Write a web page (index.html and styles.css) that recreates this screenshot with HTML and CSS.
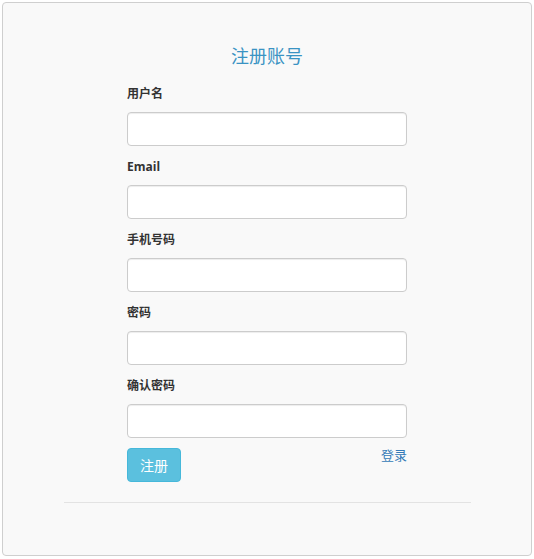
FILE: index.html
```html
<!DOCTYPE html>
<html lang="zh-CN">

<head>
    <meta charset="UTF-8">
    <meta name="viewport" content="width=device-width, initial-scale=1.0">
    <title>注册账号</title>
    <link rel="stylesheet" href="styles.css">
</head>

<body>
    <div class="panel">
        <h3 class="panel-title">注册账号</h3>

        <!-- Register form -->
        <form class="register-form">
            <div class="form-group">
                <label for="username">用户名</label>
                <input type="text" id="username" class="form-control">
            </div>
            <div class="form-group">
                <label for="email">Email</label>
                <input type="email" id="email" class="form-control">
            </div>
            <div class="form-group">
                <label for="phone">手机号码</label>
                <input type="text" id="phone" class="form-control">
            </div>
            <div class="form-group">
                <label for="password">密码</label>
                <input type="password" id="password" class="form-control">
            </div>
            <div class="form-group">
                <label for="confirm">确认密码</label>
                <input type="password" id="confirm" class="form-control">
            </div>
            <div class="form-actions">
                <button type="button" class="btn-info">注册</button>
                <a href="#" class="login-link">登录</a>
            </div>
        </form>

        <hr class="divider">
    </div>
</body>

</html>
```

FILE: styles.css
```css
/* General Reset */
* {
    margin: 0;
    padding: 0;
    box-sizing: border-box;
}

body {
    font-family: 'Open Sans', 'Noto Sans CJK SC', sans-serif;
    font-size: 13px;
    color: #333;
    background: #ffffff;
    padding: 2px 2px 3px 2px;
}

.panel {
    height: 554px;
    background: #f9f9f9;
    border: 1px solid #cfcfcf;
    border-radius: 4px;
    padding-top: 40px;
}

.panel-title {
    text-align: center;
    font-size: 18px;
    font-weight: normal;
    line-height: 26px;
    color: #3a93c3;
    margin-bottom: 13px;
}

.register-form {
    width: 280px;
    margin: 0 auto;
}

.form-group {
    margin-bottom: 9px;
}

.form-group label {
    display: block;
    font-size: 12px;
    font-weight: bold;
    line-height: 20px;
    padding-top: 2px;
    margin-bottom: 8px;
}

.form-control {
    display: block;
    width: 100%;
    height: 34px;
    background: #ffffff;
    border: 1px solid #cccccc;
    border-radius: 4px;
    box-shadow: inset 0 1px 1px rgba(0, 0, 0, 0.075);
}

.form-actions {
    display: flex;
    justify-content: space-between;
    align-items: flex-start;
    padding-top: 1px;
}

.btn-info {
    width: 54px;
    height: 34px;
    font-family: inherit;
    font-size: 14px;
    color: #ffffff;
    background: #5bc0de;
    border: 1px solid #46b8da;
    border-radius: 4px;
}

.login-link {
    font-size: 13px;
    line-height: 14px;
    color: #337ab7;
    text-decoration: none;
}

.divider {
    border: 0;
    border-top: 1px solid #e3e3e3;
    margin: 20px 60px 0 61px;
}
```
